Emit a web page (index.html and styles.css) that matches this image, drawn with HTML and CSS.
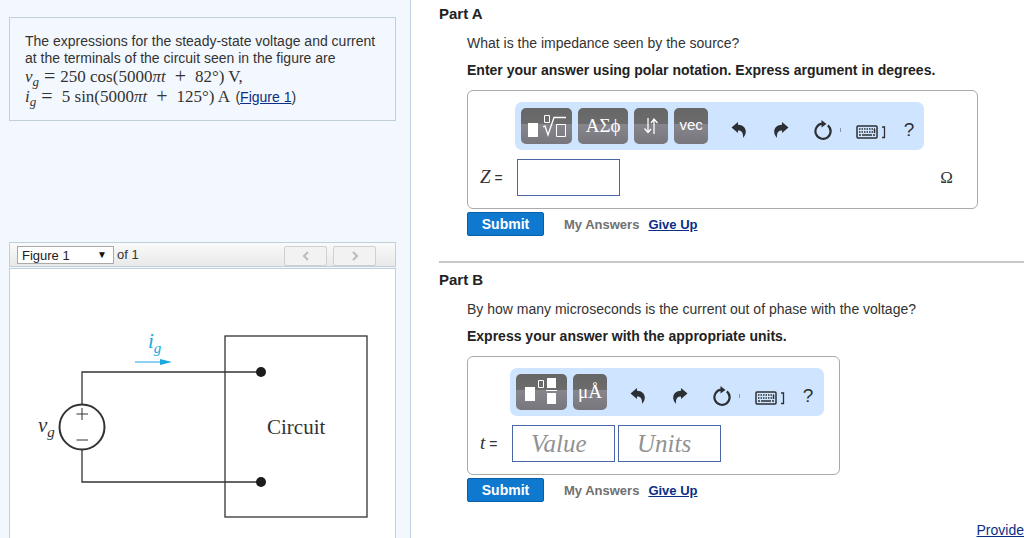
FILE: index.html
```html
<!DOCTYPE html>
<html lang="en">

<head>
    <title>Steady-state voltage and current</title>
    <meta charset="UTF-8">
    <meta name="viewport" content="width=device-width, initial-scale=1.0">
    <link rel="stylesheet" href="styles.css">
</head>

<body>
    <!-- Icons shared by both toolbars. -->
    <svg class="sprites" aria-hidden="true">
        <symbol id="undo" viewBox="0 0 16 18">
            <path d="M7 1 0.500 6.500 7 12V9.500C10.500 9.500 12.500 11.500 12 17 17.500 11 14.500 4 7 3.800Z" />
        </symbol>
        <symbol id="redo" viewBox="0 0 16 18">
            <path d="M9 1 15.500 6.500 9 12V9.500C5.500 9.500 3.500 11.500 4 17-1.500 11 1.500 4 9 3.800Z" />
        </symbol>
        <symbol id="reset" viewBox="0 0 20 20">
            <path d="M14.800 5.300A7.600 7.600 0 1 1 9 3.700" fill="none" stroke="currentColor" stroke-width="2.200" />
            <path d="M8.500 0 13.500 4 8.500 7.500Z" />
        </symbol>
        <symbol id="keyboard" viewBox="0 0 30 14">
            <rect x="1" y="1" width="20" height="12" rx="1" fill="none" stroke="currentColor" stroke-width="1.500" />
            <path d="M3 4H19M3 7H19" fill="none" stroke="currentColor" stroke-width="1.500" stroke-dasharray="1.500 1" />
            <path d="M3 10H5M6 10H16M17 10H19M18.500 4V8" fill="none" stroke="currentColor" stroke-width="1.500" />
            <path d="M26 2H28.500V12.500H26" fill="none" stroke="currentColor" stroke-width="1.300" />
        </symbol>
    </svg>

    <div class="page">
        <aside class="sidebar">
            <section class="problem">
                <p>The expressions for the steady-state voltage and current at the terminals of the circuit seen in the figure are</p>
                <p class="math"><i>v<sub>g</sub></i><span class="op">=</span>250 cos(5000<i>πt</i><span class="op plus">+</span>82°) V,</p>
                <p class="math"><i>i<sub>g</sub></i><span class="op">=</span>&nbsp;5 sin(5000<i>πt</i><span class="op plus">+</span>125°) A <span class="ref">(<a href="#figure">Figure 1</a>)</span></p>
            </section>

            <div class="figure-bar">
                <div class="picker">
                    <select id="figure-select">
                        <option>Figure 1</option>
                    </select>
                    <span class="arrow" aria-hidden="true">▼</span>
                </div>
                <label for="figure-select">of 1</label>
                <div class="pager">
                    <button type="button" aria-label="Previous figure"><svg width="8" height="10" viewBox="0 0 8 10"><path d="M6 1 2 5 6 9" /></svg></button>
                    <button type="button" aria-label="Next figure"><svg width="8" height="10" viewBox="0 0 8 10"><path d="M2 1 6 5 2 9" /></svg></button>
                </div>
            </div>
            <div class="figure" id="figure">
                <svg width="385" height="269" viewBox="0 0 385 269" role="img" aria-label="Source connected to a circuit">
                    <g fill="none" stroke="#333" stroke-width="1.300">
                        <path d="M251 103H72V135M72 181V213H251" />
                        <rect x="215" y="67" width="142" height="181" />
                        <circle cx="72" cy="158" r="22.500" stroke-width="2" />
                        <path d="M66.500 145H78M72 139V151M66.500 171H78" stroke-width="1" />
                    </g>
                    <g fill="#1c1c1c">
                        <circle cx="251" cy="103" r="5" />
                        <circle cx="251" cy="213" r="5" />
                    </g>
                    <path d="M125 93H151" stroke="#1ba8e0" />
                    <path d="M150 90 162 93 150 96Z" fill="#1ba8e0" />
                    <g class="figure-text">
                        <text x="138" y="79" fill="#1ba8e0" font-style="italic">i<tspan dy="5" font-size="15">g</tspan></text>
                        <text x="28" y="163" font-style="italic">v<tspan dy="5" font-size="15">g</tspan></text>
                        <text x="257" y="165">Circuit</text>
                    </g>
                </svg>
            </div>
        </aside>

        <main class="parts">
            <section class="part">
                <h2>Part A</h2>
                <div class="part-body">
                    <p>What is the impedance seen by the source?</p>
                    <p class="instruction">Enter your answer using polar notation. Express argument in degrees.</p>
                    <form>
                        <div class="answer answer-wide">
                            <div class="toolbar">
                                <button type="button" class="key key-wide" aria-label="Templates">
                                    <svg width="40" height="28" viewBox="0 0 40 28" fill="none" stroke="#fff">
                                        <path d="M2 11H12V25H2Z" fill="#fff" stroke="none" />
                                        <path d="M18.500 3.500H23.500V10.500H18.500ZM30.500 12.500H39.500V24.500H30.500Z" />
                                        <path d="M17 15 19 14 22 23 28 5.500H40" stroke-width="1.300" />
                                    </svg>
                                </button>
                                <button type="button" class="key key-wide greek">ΑΣϕ</button>
                                <button type="button" class="key" aria-label="Arrows">
                                    <svg width="16" height="18" viewBox="0 0 16 18" fill="none" stroke="#fff" stroke-width="1.300">
                                        <path d="M5 1V15M1.500 11.500 5 15.500 8 12M11 17V3M8 6 11 2 14.500 6" />
                                    </svg>
                                </button>
                                <button type="button" class="key vec">vec</button>
                                <div class="tools">
                                    <button type="button" aria-label="Undo"><svg width="16" height="18"><use href="#undo" /></svg></button>
                                    <button type="button" aria-label="Redo"><svg width="16" height="18"><use href="#redo" /></svg></button>
                                    <button type="button" class="reset" aria-label="Reset"><svg width="20" height="20"><use href="#reset" /></svg></button>
                                    <button type="button" class="keyboard" aria-label="Keyboard shortcuts"><svg width="30" height="14"><use href="#keyboard" /></svg></button>
                                    <button type="button" class="help">?</button>
                                </div>
                            </div>
                            <div class="entry">
                                <label for="impedance"><i>Z</i> =</label>
                                <input type="text" id="impedance">
                                <span class="unit">Ω</span>
                            </div>
                        </div>
                        <div class="actions">
                            <button type="submit" class="submit">Submit</button>
                            <span>My Answers</span>
                            <a href="#">Give Up</a>
                        </div>
                    </form>
                </div>
            </section>

            <section class="part">
                <h2>Part B</h2>
                <div class="part-body">
                    <p>By how many microseconds is the current out of phase with the voltage?</p>
                    <p class="instruction">Express your answer with the appropriate units.</p>
                    <form>
                        <div class="answer answer-units">
                            <div class="toolbar">
                                <button type="button" class="key key-wide" aria-label="Templates">
                                    <svg width="40" height="28" viewBox="0 0 40 28" fill="#fff">
                                        <path d="M3 9H13V23H3ZM25 0H34V10H25ZM25 15H34V26H25ZM24 12H35V13H24Z" />
                                        <path d="M16.500 2.500H21.500V9.500H16.500Z" fill="none" stroke="#fff" />
                                    </svg>
                                </button>
                                <button type="button" class="key greek">μÅ</button>
                                <div class="tools">
                                    <button type="button" aria-label="Undo"><svg width="16" height="18"><use href="#undo" /></svg></button>
                                    <button type="button" aria-label="Redo"><svg width="16" height="18"><use href="#redo" /></svg></button>
                                    <button type="button" class="reset" aria-label="Reset"><svg width="20" height="20"><use href="#reset" /></svg></button>
                                    <button type="button" class="keyboard" aria-label="Keyboard shortcuts"><svg width="30" height="14"><use href="#keyboard" /></svg></button>
                                    <button type="button" class="help">?</button>
                                </div>
                            </div>
                            <div class="entry">
                                <label for="time"><i>t</i> =</label>
                                <input type="text" id="time" placeholder="Value">
                                <input type="text" aria-label="Units" placeholder="Units">
                            </div>
                        </div>
                        <div class="actions">
                            <button type="submit" class="submit">Submit</button>
                            <span>My Answers</span>
                            <a href="#">Give Up</a>
                        </div>
                    </form>
                </div>
            </section>

            <footer><a href="#">Provide</a></footer>
        </main>
    </div>
</body>

</html>
```

FILE: styles.css
```css
* {
    box-sizing: border-box;
}

body {
    margin: 0;
    font-family: "Liberation Sans", Arial, sans-serif;
    font-size: 14px;
    line-height: 17px;
    color: #333;
    background: #fff;
}

p,
h2 {
    margin: 0;
}

a {
    color: #0a2f87;
    text-decoration: underline;
}

button,
input,
select {
    font-family: inherit;
    margin: 0;
}

button {
    display: flex;
    align-items: center;
    justify-content: center;
    padding: 0;
}

.sprites {
    display: none;
}

.page {
    display: flex;
    min-height: 100vh;
}

/* Left column: problem text and figure */
.sidebar {
    flex: 0 0 411px;
    display: flex;
    flex-direction: column;
    padding: 17px 14px 0 9px;
    background: #f3f8fe;
    border-right: 1px solid #c4d3e3;
}

.problem {
    padding: 15px 14px 13px 15px;
    margin-bottom: 121px;
    border: 1px solid #c0d0d8;
}

.math {
    font-family: "Liberation Serif", "Times New Roman", serif;
    font-size: 17px;
    line-height: 20px;
    white-space: nowrap;
}

.math sub {
    font-size: 13px;
    line-height: 0;
}

.op {
    margin: 0 5px;
    font-size: 20px;
    line-height: 0;
    vertical-align: -1px;
}

.plus {
    margin: 0 9px;
}

.ref {
    margin-left: 2px;
    font-family: "Liberation Sans", Arial, sans-serif;
    font-size: 14px;
}

.figure-bar {
    display: flex;
    align-items: flex-start;
    height: 25px;
    padding: 3px 19px 0 7px;
    margin-bottom: 1px;
    border: 1px solid #c0cfda;
    background: linear-gradient(#fafafa, #e9e9e9);
}

.picker {
    position: relative;
    margin-right: 3px;
}

.picker select {
    appearance: none;
    display: block;
    width: 97px;
    height: 18px;
    padding: 0 4px;
    border: 1px solid #a9a9a9;
    border-radius: 0;
    background: #fff;
    color: #222;
    font-size: 13px;
}

.arrow {
    position: absolute;
    top: 0;
    right: 7px;
    font-size: 10px;
    color: #111;
    pointer-events: none;
}

.figure-bar label {
    font-size: 13px;
}

.pager {
    display: flex;
    gap: 6px;
    margin-left: auto;
}

.pager button {
    width: 43px;
    height: 20px;
    border: 1px solid #d0d0d0;
    border-radius: 2px;
    background: #f2f2f2;
}

.pager path {
    fill: none;
    stroke: #bbb;
    stroke-width: 2;
}

.figure {
    flex: 1;
    border: 1px solid #c0cfda;
    border-bottom: 0;
    background: #fff;
}

.figure svg {
    display: block;
}

.figure-text {
    font-family: "Liberation Serif", "Times New Roman", serif;
    font-size: 21px;
    fill: #333;
}

/* Right column: the questions */
.parts {
    flex: 1;
    min-width: 0;
    padding: 5px 0 0 28px;
}

.part h2 {
    margin-bottom: 12px;
    font-size: 15px;
    line-height: 18px;
    color: #222;
}

.part + .part {
    padding-top: 8px;
    margin-top: 25px;
    border-top: 2px solid #c8c8c8;
}

.part-body {
    padding-left: 28px;
}

.part-body .instruction {
    margin: 10px 0 11px;
    font-weight: bold;
    color: #222;
}

.answer {
    height: 119px;
    border: 1px solid #aaa;
    border-radius: 6px;
    padding: 11px 15px 12px 12px;
}

.answer-wide {
    width: 511px;
}

.answer-units {
    width: 373px;
}

.toolbar {
    display: flex;
    gap: 6px;
    height: 48px;
    margin-left: 35px;
    padding: 6px;
    border-radius: 7px;
    background: #cfe5ff;
}

.answer-units .toolbar {
    margin-left: 30px;
}

.answer-wide .toolbar {
    margin-right: 38px;
}

.key {
    width: 34px;
    height: 36px;
    border: 0;
    border-radius: 5px;
    background: linear-gradient(#666, #6c6c6c 44%, #87868c 45%, #77767c);
    color: #fff;
    font-size: 15px;
}

.key-wide {
    width: 51px;
}

.vec {
    padding-bottom: 3px;
}

.greek {
    font-family: "Liberation Serif", "Times New Roman", serif;
    font-size: 19px;
}

.tools {
    display: flex;
    align-items: center;
    padding: 8px 0 0 4px;
}

.tools button {
    width: 42px;
    height: 24px;
    border: 0;
    background: none;
    color: #2c2f33;
    fill: currentColor;
}

/* Thin tick that separates the reset and keyboard tools. */
.tools .reset::after {
    content: "";
    width: 1px;
    height: 4px;
    margin-left: 7px;
    background: #8494a8;
}

.tools .reset {
    width: 50px;
}

.tools .keyboard {
    width: 38px;
    padding-top: 4px;
}

.tools .help {
    width: 18px;
    margin-left: 10px;
    font-size: 19px;
}

.entry {
    display: flex;
    align-items: center;
    gap: 3px;
    margin-top: 9px;
}

.entry label {
    width: 34px;
}

.answer-units .entry label {
    width: 29px;
}

.entry i {
    font-family: "Liberation Serif", "Times New Roman", serif;
    font-size: 19px;
}

.entry input {
    width: 103px;
    height: 37px;
    padding: 0 18px;
    border: 1px solid #4a67a5;
    background: #fff;
    font-family: "Liberation Serif", "Times New Roman", serif;
    font-size: 25px;
    font-style: italic;
}

.entry input::placeholder {
    color: #929292;
}

.unit {
    margin: 0 9px 0 auto;
    font-family: "Liberation Serif", "Times New Roman", serif;
    font-size: 17px;
}

.actions {
    display: flex;
    align-items: center;
    gap: 9px;
    margin-top: 3px;
    font-size: 13px;
    font-weight: bold;
    color: #707070;
}

.submit {
    width: 77px;
    height: 24px;
    margin-right: 11px;
    border: 1px solid #0a5fa8;
    border-radius: 2px;
    background: #0f79cf;
    color: #fff;
    font-size: 14px;
    font-weight: bold;
}

footer {
    display: flex;
    justify-content: flex-end;
    margin-top: 20px;
}
```
